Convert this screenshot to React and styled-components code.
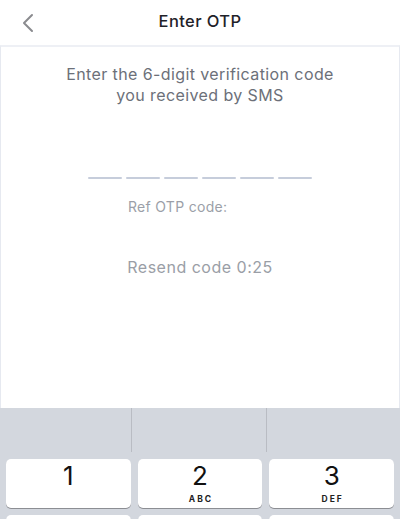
import React from "react"
import styled, { createGlobalStyle } from "styled-components"

const GlobalStyle = createGlobalStyle`
  html, body {
    margin: 0;
    padding: 0;
    background: #ffffff;
  }
  body {
    font-family: Inter, "Liberation Sans", Arial, sans-serif;
    -webkit-font-smoothing: antialiased;
  }
`

const Page = styled.div`
  width: 400px;
  height: 519px;
  display: flex;
  flex-direction: column;
  overflow: hidden;
  background: #ffffff;
`

const Header = styled.div`
  height: 45px;
  flex: none;
  display: grid;
  grid-template-columns: 56px 1fr 56px;
  align-items: center;
`

const BackButton = styled.button`
  border: none;
  background: none;
  padding: 0 0 0 22px;
  height: 45px;
  display: flex;
  align-items: center;
  cursor: pointer;
`

const Title = styled.h1`
  margin: 0;
  text-align: center;
  font-size: 16.5px;
  letter-spacing: 0.4px;
  font-weight: 500;
  color: #1f2229;
  padding-bottom: 4px;
`

const Card = styled.div`
  height: 363px;
  flex: none;
  box-sizing: border-box;
  border-top: 2px solid #eef0f5;
  border-left: 1.5px solid #e6e9f0;
  border-right: 1.5px solid #e6e9f0;
  display: flex;
  flex-direction: column;
  align-items: center;
  padding-top: 17px;
`

const Prompt = styled.p`
  margin: 0;
  text-align: center;
  font-size: 16px;
  letter-spacing: 0.4px;
  line-height: 21px;
  color: #6c7079;
`

const Dashes = styled.div`
  margin-top: 71px;
  display: flex;
  gap: 4px;
`

const Dash = styled.span`
  width: 34px;
  height: 2px;
  border-radius: 1px;
  background: #c6cddb;
`

const RefCode = styled.div`
  align-self: stretch;
  padding-left: 127px;
  margin-top: 20px;
  font-size: 14px;
  letter-spacing: 0.3px;
  line-height: 16px;
  color: #9b9fa8;
`

const Resend = styled.div`
  margin-top: 42px;
  font-size: 16px;
  letter-spacing: 0.5px;
  line-height: 20px;
  color: #9a9ea6;
`

const Keyboard = styled.div`
  flex: 1;
  background: #d3d7de;
`

const Suggestions = styled.div`
  height: 44px;
  display: grid;
  grid-template-columns: 132px 135px 1fr;
`

const Suggestion = styled.div`
  border-right: ${(props) => (props.last ? "none" : "1px solid #b9bcc3")};
`

const Keys = styled.div`
  display: grid;
  grid-template-columns: repeat(3, 1fr);
  gap: 7px;
  padding: 7px 6px 0;
`

const Key = styled.div`
  height: 49px;
  background: #ffffff;
  border-radius: 5px;
  box-shadow: 0 1px 0 #8c8e93;
  display: flex;
  flex-direction: column;
  align-items: center;
  color: #111111;
`

const Digit = styled.span`
  font-size: 26px;
  line-height: 28px;
  margin-top: 3px;
  font-weight: 400;
`

const Letters = styled.span`
  font-size: 8.5px;
  font-weight: 700;
  letter-spacing: 2px;
  margin-left: 2px;
  line-height: 10px;
  margin-top: 4px;
  color: #222222;
`

// only the first row is visible; the second row shows just its top edge
const keys = [
  { id: "1", digit: "1", letters: "" },
  { id: "2", digit: "2", letters: "ABC" },
  { id: "3", digit: "3", letters: "DEF" },
  { id: "4" },
  { id: "5" },
  { id: "6" },
]

const App = () => {
  return (
    <Page>
      <GlobalStyle />
      <Header>
        <BackButton aria-label="Back">
          <svg width="12" height="20" viewBox="0 0 12 20">
            <path
              d="M10 2 L2 10 L10 18"
              fill="none"
              stroke="#8a8b8f"
              strokeWidth="2"
              strokeLinecap="round"
              strokeLinejoin="round"
            />
          </svg>
        </BackButton>
        <Title>Enter OTP</Title>
        <div />
      </Header>

      <Card>
        <Prompt>
          Enter the 6-digit verification code
          <br />
          you received by SMS
        </Prompt>
        <Dashes>
          {[0, 1, 2, 3, 4, 5].map((i) => (
            <Dash key={i} />
          ))}
        </Dashes>
        <RefCode>Ref OTP code:</RefCode>
        <Resend>Resend code 0:25</Resend>
      </Card>

      <Keyboard>
        <Suggestions>
          <Suggestion />
          <Suggestion />
          <Suggestion last />
        </Suggestions>
        <Keys>
          {keys.map((k) => (
            <Key key={k.id}>
              {k.digit && <Digit>{k.digit}</Digit>}
              {k.letters && <Letters>{k.letters}</Letters>}
            </Key>
          ))}
        </Keys>
      </Keyboard>
    </Page>
  )
}

export default App
